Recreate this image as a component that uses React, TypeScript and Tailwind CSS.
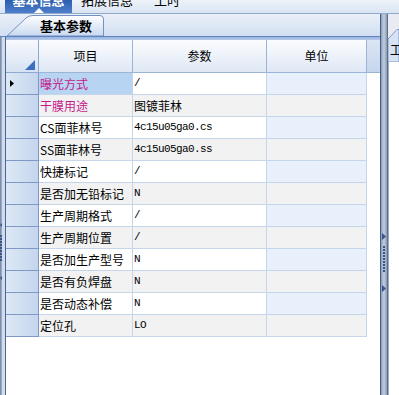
import React from "react";

type Row = { name: string; value: string; pink?: boolean };

const rows: Row[] = [
	{ name: "曝光方式", value: "/", pink: true },
	{ name: "干膜用途", value: "图镀菲林", pink: true },
	{ name: "CS面菲林号", value: "4c15u05ga0.cs" },
	{ name: "SS面菲林号", value: "4c15u05ga0.ss" },
	{ name: "快捷标记", value: "/" },
	{ name: "是否加无铅标记", value: "N" },
	{ name: "生产周期格式", value: "/" },
	{ name: "生产周期位置", value: "/" },
	{ name: "是否加生产型号", value: "N" },
	{ name: "是否有负焊盘", value: "N" },
	{ name: "是否动态补偿", value: "N" },
	{ name: "定位孔", value: "LO" },
];

const isAscii = (s: string) => /^[\x00-\x7f]+$/.test(s);

const Dots = () => (
	<div className="flex flex-col gap-[1px]">
		{Array.from({ length: 9 }).map((_, i) => (
			<div key={i} className="w-[2px] h-[2px] bg-[#3a5488]" />
		))}
	</div>
);

const App = () => {
	return (
		<div
			className="w-[399px] h-[395px] overflow-hidden flex flex-col bg-[#e3eaf5] text-[12px] text-black"
			style={{ fontFamily: '"Noto Sans CJK SC", "Liberation Sans", sans-serif' }}>
			{/* top tabs */}
			<div className="h-[13px] flex items-start bg-gradient-to-b from-[#eef3fa] to-[#d9e4f3] overflow-hidden">
				<div className="ml-[5px] w-[67px] h-[13px] bg-gradient-to-b from-[#2b5eae] to-[#4d7fcc] flex flex-col items-center overflow-hidden">
					<span className="mt-[-9px] text-[13px] leading-[17px] font-bold text-white">基本信息</span>
					<svg width="10" height="5" className="mt-auto" viewBox="0 0 10 5">
						<polygon points="0,5 5,0 10,5" fill="#ffffff" />
					</svg>
				</div>
				<span className="ml-[9px] mt-[-9px] text-[13px] leading-[17px]">拓展信息</span>
				<span className="ml-[21px] mt-[-9px] text-[13px] leading-[17px]">工时</span>
			</div>
			<div className="h-[1px] bg-[#93a9ca]" />

			<div className="flex-1 flex min-h-0">
				{/* main column */}
				<div className="w-[380px] flex flex-col">
					{/* sub tab strip */}
					<div className="h-[22px] flex items-end bg-gradient-to-b from-[#eaf0f9] to-[#d2dff1]">
						<div className="relative ml-[6px] w-[100px] h-[21px]">
							<svg width="100" height="21" viewBox="0 0 100 21" className="absolute inset-0">
								<defs>
									<linearGradient id="st" x1="0" y1="0" x2="0" y2="1">
										<stop offset="0" stopColor="#ffffff" />
										<stop offset="1" stopColor="#c9d9ef" />
									</linearGradient>
								</defs>
								<path d="M1,21 L20,3 Q23,0.5 27,0.5 L94,0.5 Q97.5,0.5 97.5,4 L97.5,21 Z" fill="url(#st)" stroke="#7391c2" strokeWidth="1" />
							</svg>
							<span className="absolute left-[34px] top-[2px] text-[13px] leading-[17px] font-bold">基本参数</span>
						</div>
					</div>
					<div className="h-[1px] bg-[#5f83bf]" />

					<div className="flex-1 flex min-h-0">
						{/* left splitter */}
						<div className="w-[5px] flex">
							<div className="w-[2px] bg-gradient-to-r from-[#6f83a3] to-[#a8b6cb] flex flex-col items-center pt-[185px]">
								<svg width="3" height="6" viewBox="0 0 3 6"><polygon points="3,0 0,3 3,6" fill="#3a5488" /></svg>
								<div className="mt-[7px] ml-[-1px]"><Dots /></div>
								<svg width="3" height="6" className="mt-[14px]" viewBox="0 0 3 6"><polygon points="3,0 0,3 3,6" fill="#3a5488" /></svg>
							</div>
							<div className="flex-1 bg-[#d3dcea]" />
						</div>

						{/* table */}
						<div className="flex-1 flex flex-col bg-white border-l border-[#47679b]">
							<div className="h-[3px] bg-gradient-to-b from-[#9bb5e0] to-[#b6cae9]" />
							<div className="grid grid-cols-[33px_94px_134px_100px_1fr] h-[33px]">
								<div className="relative border-r border-b border-[#8fa9d0] bg-gradient-to-b from-[#f7f9fd] to-[#d6e2f2]">
									<svg width="10" height="10" viewBox="0 0 10 10" className="absolute right-[3px] bottom-[2px]">
										<polygon points="10,0 10,10 0,10" fill="#3c6fc0" />
									</svg>
								</div>
								<div className="border-r border-b border-[#9cb4d6] bg-gradient-to-b from-[#fbfcfe] to-[#dfe8f5] flex items-center justify-center">项目</div>
								<div className="border-r border-b border-[#9cb4d6] bg-gradient-to-b from-[#fbfcfe] to-[#dfe8f5] flex items-center justify-center">参数</div>
								<div className="border-r border-b border-[#9cb4d6] bg-gradient-to-b from-[#fbfcfe] to-[#dfe8f5] flex items-center justify-center">单位</div>
								<div className="border-b border-[#9cb4d6] bg-gradient-to-b from-[#dbe5f3] to-[#c6d6ec]" />
							</div>
							{rows.map((row, i) => {
								const odd = i % 2 === 0;
								const base = odd ? "bg-white" : "bg-[#f2f2f2]";
								return (
									<div key={row.name} className="grid grid-cols-[33px_94px_134px_100px_1fr] h-[22px]">
										<div className="border-r border-b border-[#7f99c4] bg-gradient-to-r from-[#dde8f6] to-[#c4d5ed] flex items-center pl-[4px]">
											{i === 0 && (
												<svg width="4" height="7" viewBox="0 0 4 7">
													<polygon points="0,0 4,3.5 0,7" fill="#000000" />
												</svg>
											)}
										</div>
										<div
											className={`border-r border-b border-[#c5d5ea] flex items-center pl-[1px] whitespace-nowrap ${
												i === 0 ? "bg-[#b8d4f3]" : base
											} ${row.pink ? "text-[#c4198a]" : ""}`}>
											{row.name}
										</div>
										<div className={`border-r border-b border-[#c5d5ea] flex items-center pl-[1px] whitespace-nowrap ${base}`}>
											{isAscii(row.value) ? (
												<span
													className="text-[11px] tracking-[-0.6px]"
													style={{ fontFamily: '"Liberation Mono", monospace' }}>
													{row.value}
												</span>
											) : (
												row.value
											)}
										</div>
										<div className={`border-r border-b border-[#c5d5ea] ${odd ? "bg-[#e8f1fb]" : "bg-[#f2f2f2]"}`} />
										<div className="bg-white" />
									</div>
								);
							})}
						</div>
					</div>
				</div>

				{/* right splitter */}
				<div className="w-[8px] flex border-l border-[#3f5f93]">
					<div className="flex-1 bg-gradient-to-r from-[#8e9db4] via-[#c4cedc] to-[#8a99b0] flex flex-col items-center pt-[219px]">
						<svg width="4" height="7" viewBox="0 0 4 7"><polygon points="0,0 4,3.5 0,7" fill="#3a5488" /></svg>
						<div className="mt-[6px]"><Dots /></div>
						<svg width="4" height="7" className="mt-[13px]" viewBox="0 0 4 7"><polygon points="0,0 4,3.5 0,7" fill="#3a5488" /></svg>
					</div>
					<div className="w-[1px] bg-[#5a6f92]" />
				</div>

				{/* right panel */}
				<div className="flex-1 flex flex-col bg-[#e8ecf2]">
					<div className="h-[15px]" />
					<div className="relative h-[33px]">
						<svg width="11" height="33" viewBox="0 0 11 33" className="absolute inset-0">
							<path d="M0,10 L9,0.5 L11,0.5 L11,33 L0,33 Z" fill="#d7e3f3" stroke="#7f9cc8" strokeWidth="1" />
						</svg>
						<span className="absolute left-[2px] top-[13px] text-[12px] leading-[16px]">工</span>
					</div>
					<div className="flex-1 bg-white border-l border-[#9aaccb]" />
				</div>
			</div>
		</div>
	);
};

export default App;
